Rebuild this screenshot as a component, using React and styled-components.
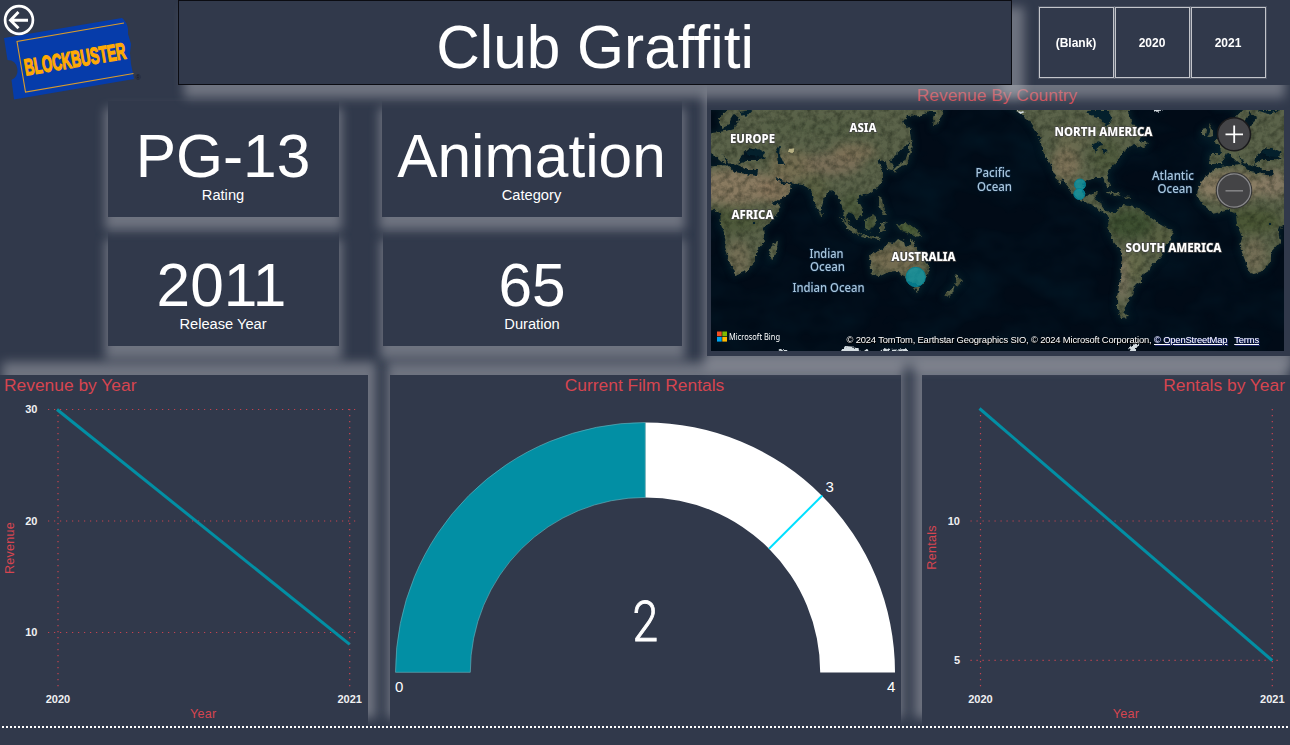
import React from "react";
import styled, { createGlobalStyle } from "styled-components";

const bg = "#31394b";
const red = "#d64550";
const teal = "#028fa4";
const glow = "rgba(178, 180, 187, 0.48)";
const sans = '"Liberation Sans", Arial, sans-serif';

const GlobalStyle = createGlobalStyle`
  * { box-sizing: border-box; }
  body { margin: 0; background: ${bg}; font-family: ${sans}; overflow: hidden; }
  svg { display: block; }
`;

const Page = styled.main`
  width: 1290px;
  height: 745px;
  overflow: hidden;
  display: grid;
  grid-template-rows: 85px 290px 350px 1fr;
  background: ${bg};
`;

const Header = styled.header`
  display: grid;
  grid-template-columns: 178px 834px 278px;
  align-items: start;
  position: relative;
  z-index: 4;
`;

const Brand = styled.div`
  height: 105px;
`;

const FilmTitle = styled.h1`
  position: relative;
  z-index: 2;
  margin: 0;
  padding-top: 1px;
  height: 85px;
  display: flex;
  justify-content: center;
  border: 1px solid #0b0c12;
  background: ${bg};
  box-shadow: 9px 10px 10px 3px ${glow};
  color: #fff;
  font-size: 60.4px;
  font-weight: 400;
  line-height: 90px;
`;

const Slicer = styled.div`
  display: flex;
  gap: 1px;
  height: 85px;
  padding: 7px 0 0 27px;
  background: ${bg};
  box-shadow: -8px 10px 10px 3px ${glow};
`;

const SlicerButton = styled.button`
  width: 75px;
  height: 71px;
  padding: 0 1px 0 0;
  border: 1px solid #c3c5cb;
  outline: 1px solid rgba(160, 163, 172, 0.25);
  outline-offset: 0;
  background: ${bg};
  color: #fff;
  font: 700 12px ${sans};
`;

const Middle = styled.section`
  display: grid;
  grid-template-columns: 707px 583px;
  align-items: start;
  position: relative;
  z-index: 3;
`;

const Cards = styled.div`
  display: grid;
  grid-template-columns: 231px 300px;
  grid-template-rows: 116px 114px;
  column-gap: 43px;
  row-gap: 15px;
  padding: 16px 0 0 108px;
`;

const Card = styled.article`
  position: relative;
  z-index: ${(p) => p.$layer};
  margin-left: ${(p) => p.$inset || 0}px;
  padding-top: ${(p) => p.$top}px;
  background: ${bg};
  box-shadow: 0 10px 10px 3px ${glow};
  color: #fff;
  text-align: center;
`;

const CardValue = styled.div`
  font-size: 60.4px;
  line-height: 60px;
  height: 60px;
  padding-right: ${(p) => p.$shift || 0}px;
`;

const CardLabel = styled.div`
  padding-right: 1px;
  font-size: 14.67px;
  line-height: 18px;
`;

const MapPanel = styled.article`
  height: 271px;
  padding: 0 6px 5px 4px;
  background: ${bg};
  box-shadow: 0 10px 10px 3px ${glow};
`;

const PanelTitle = styled.h2`
  margin: 0;
  height: 25px;
  padding: 0 5px 0 4px;
  color: ${red};
  font-size: 17.4px;
  font-weight: 400;
  line-height: 21px;
  text-align: ${(p) => p.$align};
`;

const MapView = styled.div`
  position: relative;
  width: 573px;
  height: 241px;
  overflow: hidden;
`;

const Bottom = styled.section`
  display: grid;
  grid-template-columns: 368px 511px 368px;
  column-gap: 21.5px;
  position: relative;
  z-index: 1;
`;

const ChartPanel = styled.article`
  background: ${bg};
  box-shadow: ${(p) => p.$dx}px -10px 10px 3px ${glow};
`;

const Footer = styled.footer`
  position: relative;
  z-index: 2;
  padding-top: 1px;
  background: ${bg};
`;

const DottedRule = styled.div`
  height: 2px;
  margin-left: 2px;
  background: repeating-linear-gradient(90deg, #fff 0 2px, transparent 2px 4px);
`;

function BrandMark() {
  return (
    <svg width="178" height="105" viewBox="0 0 178 105">
      <path
        d="M4 38 L122 18 Q127 22 128 29 L128 34 L131 44 L130 53 L131 64 L134 79 L14 99.5 L11.5 80 Q18 77 17.5 69 Q16 60 7.5 60 Z"
        fill="#063caa"
      />
      <path d="M124 23 L17 41.5 L25.5 92 L133.5 73.5" fill="none" stroke="#d99b2c" strokeWidth="1.1" />
      <g transform="translate(25.8 75.6) rotate(-9.7) scale(0.64 1)">
        <text
          fontFamily={sans}
          fontWeight="700"
          fontSize="23"
          textLength="160"
          lengthAdjust="spacingAndGlyphs"
          fill="#ffa903"
          stroke="#ffa903"
          strokeWidth="1.4"
        >
          BLOCKBUSTER
        </text>
      </g>
      <text x="135.5" y="79.5" fontFamily={sans} fontSize="7" fill="#15171f">®</text>
      <circle cx="19" cy="20" r="13.9" fill={bg} stroke="#fff" strokeWidth="2.7" />
      <path d="M28 20.2 H11 M18.5 12 L10.5 20.2 L18.5 28.3" fill="none" stroke="#fff" strokeWidth="2.9" />
    </svg>
  );
}

const asia =
  "M697 106 H944 L942 114 L938 124 L933 127 L934 117 L937 112 L930 112 L921 115 L907 116 L902 123 L911 129 L911 138 L905 147 L897 154 L890 160 L894 167 L892 171 L888 170 L886 162 L879 159 L878 163 L883 170 L883 180 L877 188 L868 194 L860 195 L857 200 L862 209 L862 215 L856 220 L853 213 L848 211 L846 217 L851 226 L853 232 L848 228 L844 215 L841 203 L838 196 L831 190 L825 196 L822 206 L819 212 L814 203 L811 190 L803 185 L790 183 L781 180 L775 176 L781 183 L787 183 L792 187 L787 195 L769 205 L762 193 L755 181 L757 176 L758 170 L748 170 L738 165 L746 160 L761 160 L766 158 L757 150 L749 148 L741 155 L738 166 L728 163 L722 154 L727 166 L718 158 L711 153 L706 164 L693 164 L694 154 L705 154 L704 145 L697 142 L712 133 L725 131 L734 128 L740 118 L733 112 L729 125 L722 128 L719 118 L728 108 Z";
const africa =
  "M704 167 L727 165 L735 172 L757 176 L769 203 L781 205 L776 216 L763 229 L765 242 L755 253 L755 261 L747 271 L735 275 L730 263 L724 247 L726 237 L721 225 L720 213 L714 210 L696 214 L684 202 L681 193 L684 183 L695 172 Z";
const americas =
  "M1010 106 H1128 L1131 122 L1142 134 L1139 141 L1149 143 L1143 148 L1133 145 L1123 151 L1118 161 L1109 169 L1106 175 L1110 187 L1107 187 L1103 178 L1092 178 L1084 182 L1082 192 L1087 197 L1094 192 L1098 192 L1095 200 L1102 202 L1104 210 L1111 212 L1115 212 L1123 205 L1139 208 L1154 220 L1161 225 L1173 231 L1171 240 L1163 247 L1161 257 L1154 263 L1150 270 L1141 276 L1141 282 L1134 286 L1132 296 L1128 301 L1124 312 L1129 317 L1121 318 L1117 308 L1117 297 L1120 280 L1122 253 L1113 241 L1107 227 L1110 217 L1101 211 L1092 205 L1078 199 L1070 190 L1062 178 L1060 184 L1054 174 L1050 163 L1044 155 L1042 144 L1036 131 L1028 119 Z";
const islands = [
  "M869 255 L877 251 L884 249 L888 243 L893 244 L898 239 L904 241 L905 246 L909 247 L911 238 L914 242 L917 250 L924 258 L928 267 L927 276 L922 284 L914 284 L907 280 L904 275 L897 271 L889 272 L880 276 L872 275 Z",
  "M914 287 L920 287 L918 292 Z",
  "M778 240 L777 250 L773 260 L769 258 L770 248 Z",
  "M956 275 L962 281 L958 286 L955 282 Z M955 286 L953 292 L947 298 L944 296 Z",
  "M896 224 L902 225 L907 223 L916 229 L922 237 L914 236 L908 232 L901 231 Z",
  "M865 221 L873 215 L877 219 L873 227 L870 231 L865 228 Z",
  "M838 216 L849 225 L861 234 L859 236 L848 229 Z M862 235 L881 238 L879 240 L861 237 Z",
  "M879 197 L882 199 L884 210 L887 215 L883 215 L879 205 Z M880 224 L887 221 L883 225 L886 231 L883 231 L880 233 Z",
  "M911 132 L913 146 L910 155 L907 164 L898 168 L895 173 L893 170 L898 165 L905 161 L909 150 L909 135 Z",
  "M1106 191 L1121 194 L1120 196 L1107 193 Z M1122 196 L1130 197 L1129 199 Z",
  "M820 211 L823 215 L821 217 Z",
];

function Lands() {
  return (
    <>
      <path d={asia} />
      <path d={asia} transform="translate(516 0)" />
      <path d={africa} />
      <path d={africa} transform="translate(516 0)" />
      <path d={americas} />
      <path d="M1209 123 L1213 129 L1213 136 L1207 138 L1210 132 Z M1202 130 L1206 129 L1205 135 L1202 136 Z" />
      {islands.map((d) => (
        <path key={d} d={d} />
      ))}
    </>
  );
}

function Region({ x, y, rx, ry, c, o = 0.75 }) {
  return <ellipse cx={x} cy={y} rx={rx} ry={ry} fill={c} opacity={o} />;
}

function OceanLabel({ x, y, w, children }) {
  return (
    <text x={x} y={y} textLength={w} lengthAdjust="spacingAndGlyphs" fontSize="12" fontWeight="500" fill="#a9c6de" stroke="#0b2238" strokeWidth="1.6" paintOrder="stroke">
      {children}
    </text>
  );
}

function LandLabel({ x, y, w, children }) {
  return (
    <text x={x} y={y} textLength={w} lengthAdjust="spacingAndGlyphs" fontSize="12" fontWeight="800" fill="#fff" stroke="#444" strokeWidth="1.4" paintOrder="stroke">
      {children}
    </text>
  );
}

function WorldMap() {
  return (
    <svg width="573" height="241" viewBox="711 110 573 241">
      <defs>
        <filter id="rough" x="711" y="110" width="573" height="241" filterUnits="userSpaceOnUse" colorInterpolationFilters="sRGB">
          <feTurbulence type="fractalNoise" baseFrequency="0.22" numOctaves="3" seed="4" result="n" />
          <feDisplacementMap in="SourceGraphic" in2="n" scale="5" xChannelSelector="R" yChannelSelector="G" result="shape" />
          <feGaussianBlur in="shape" stdDeviation="0.5" />
        </filter>
        <filter id="soft" x="-60%" y="-60%" width="220%" height="220%" colorInterpolationFilters="sRGB">
          <feGaussianBlur stdDeviation="5" />
        </filter>
        <filter id="shelf" x="-20%" y="-20%" width="140%" height="140%" colorInterpolationFilters="sRGB">
          <feGaussianBlur stdDeviation="3" />
        </filter>
        <filter id="grain" x="0" y="0" width="100%" height="100%" colorInterpolationFilters="sRGB">
          <feTurbulence type="fractalNoise" baseFrequency="0.16" numOctaves="4" seed="9" />
          <feColorMatrix values="0 0 0 0 0.05  0 0 0 0 0.08  0 0 0 0 0.04  1.7 0 0 0 -0.65" />
        </filter>
        <filter id="haze" x="0" y="0" width="100%" height="100%" colorInterpolationFilters="sRGB">
          <feTurbulence type="fractalNoise" baseFrequency="0.02 0.03" numOctaves="3" seed="21" />
          <feColorMatrix values="0 0 0 0 0.01  0 0 0 0 0.12  0 0 0 0 0.18  1.6 0 0 0 -0.6" />
        </filter>
        <mask id="landMask" maskUnits="userSpaceOnUse" x="711" y="110" width="573" height="241">
          <g fill="#fff" filter="url(#rough)">
            <Lands />
          </g>
        </mask>
      </defs>
      <rect x="711" y="110" width="573" height="241" fill="#010b17" />
      <rect x="711" y="110" width="573" height="241" filter="url(#haze)" opacity="0.6" />
      <g fill="#0a2b33" stroke="#0a2b33" strokeWidth="4" filter="url(#shelf)" opacity="0.6">
        <Lands />
      </g>
      <g mask="url(#landMask)">
        <rect x="711" y="110" width="573" height="241" fill="#5b634a" />
        <g filter="url(#soft)">
          <Region x={735} y={187} rx={40} ry={18} c="#988268" />
          <Region x={776} y={190} rx={17} ry={14} c="#8c775e" />
          <Region x={792} y={166} rx={22} ry={15} c="#7d7154" />
          <Region x={832} y={164} rx={30} ry={11} c="#84735d" />
          <Region x={854} y={152} rx={22} ry={8} c="#86745a" />
          <Region x={820} y={128} rx={60} ry={9} c="#566046" />
          <Region x={815} y={190} rx={12} ry={15} c="#5c6142" />
          <Region x={735} y={220} rx={28} ry={13} c="#4a5635" />
          <Region x={738} y={258} rx={12} ry={17} c="#7b7158" />
          <Region x={1230} y={186} rx={36} ry={15} c="#9a866c" />
          <Region x={1274} y={184} rx={14} ry={14} c="#94826c" />
          <Region x={1251} y={221} rx={30} ry={12} c="#46532f" />
          <Region x={1254} y={256} rx={12} ry={18} c="#7b7159" />
          <Region x={1066} y={164} rx={14} ry={17} c="#8a785d" />
          <Region x={1072} y={138} rx={18} ry={13} c="#6c6c50" />
          <Region x={1106} y={156} rx={16} ry={16} c="#4d5a3b" />
          <Region x={1130} y={224} rx={24} ry={15} c="#34492a" />
          <Region x={1160} y={240} rx={13} ry={14} c="#5a6242" />
          <Region x={1122} y={275} rx={6} ry={26} c="#8c7e69" />
          <Region x={1135} y={264} rx={9} ry={16} c="#696d4b" />
          <Region x={896} y={259} rx={28} ry={15} c="#7d7054" />
          <Region x={908} y={229} rx={14} ry={7} c="#405a2e" />
          <Region x={868} y={224} rx={10} ry={10} c="#405332" />
          <Region x={852} y={207} rx={11} ry={14} c="#465637" />
        </g>
        <rect x="711" y="110" width="573" height="241" filter="url(#grain)" opacity="0.5" />
      </g>
      <g fill="#04202c" filter="url(#rough)">
        <path d="M747 152 L756 148 L765 153 L761 157 L749 156 Z M1263 152 L1272 148 L1282 153 L1276 157 L1265 156 Z" />
        <path d="M776 148 L781 146 L780 155 L784 164 L779 164 L778 156 Z" />
        <path d="M1087 110 H1108 L1112 119 L1107 127 L1101 119 L1090 116 Z" />
        <path d="M1092 144 L1100 142 L1103 146 L1098 147 L1096 154 L1094 148 Z M1102 148 L1109 152 L1102 154 Z" />
        <path d="M752 110 L746 117 L739 112 Z M1284 110 L1268 114 L1257 110 Z" />
        <path d="M752 222 h3 v3 h-3 Z M1268 222 h3 v3 h-3 Z" />
      </g>
      <g fill="#d4dce1" filter="url(#rough)">
        <path d="M778 352 L782 349 L788 352 Z M842 352 L845 347 L857 348 L862 352 Z M864 352 L868 349 L874 352 Z M879 352 L884 348 L890 350 L905 349 L910 352 Z" />
        <path d="M1128 352 L1132 345 L1139 342 L1135 352 Z M1153 110 h9 l-4 3 Z M1018 110 l7 2 l-5 2 Z" />
        <path d="M789 149 l6 -1 l-3 5 l-4 -1 Z" fill="#b7b083" />
      </g>
      <g fontFamily='"Noto Sans", "Open Sans", sans-serif'>
        <LandLabel x={730} y={142.5} w={45}>EUROPE</LandLabel>
        <LandLabel x={849.5} y={132} w={27}>ASIA</LandLabel>
        <LandLabel x={731.5} y={219} w={42}>AFRICA</LandLabel>
        <LandLabel x={891.5} y={260.5} w={64}>AUSTRALIA</LandLabel>
        <LandLabel x={1054.5} y={136} w={98}>NORTH AMERICA</LandLabel>
        <LandLabel x={1125.5} y={251.5} w={96}>SOUTH AMERICA</LandLabel>
        <OceanLabel x={975.5} y={176.5} w={35}>Pacific</OceanLabel>
        <OceanLabel x={977} y={190.5} w={35}>Ocean</OceanLabel>
        <OceanLabel x={1152} y={180} w={42}>Atlantic</OceanLabel>
        <OceanLabel x={1157.5} y={193} w={35}>Ocean</OceanLabel>
        <OceanLabel x={809.5} y={257.5} w={34}>Indian</OceanLabel>
        <OceanLabel x={810} y={271} w={35}>Ocean</OceanLabel>
        <OceanLabel x={792.5} y={291.5} w={72}>Indian Ocean</OceanLabel>
        <text x="729" y="340" fontSize="9.5" textLength="51" lengthAdjust="spacingAndGlyphs" fill="#fff">Microsoft Bing</text>
      </g>
      <g fill="#069db0" fillOpacity="0.72" stroke="#087f91" strokeWidth="1">
        <circle cx="915.7" cy="277" r="9.7" />
        <circle cx="1080" cy="184.5" r="5.5" />
        <circle cx="1079.3" cy="194" r="5.5" />
      </g>
      <path fill="#f25022" d="M717 331.5h4.7v4.7h-4.7z" />
      <path fill="#7fba00" d="M722.3 331.5h4.7v4.7h-4.7z" />
      <path fill="#00a4ef" d="M717 336.9h4.7v4.7h-4.7z" />
      <path fill="#ffb900" d="M722.3 336.9h4.7v4.7h-4.7z" />
      <circle cx="1234" cy="134.3" r="16.5" fill="#444447" stroke="#1a1a1c" strokeWidth="1.5" />
      <path d="M1225.5 134.3h17.5 M1234.2 125.5v17.5" stroke="#fff" strokeWidth="1.8" />
      <circle cx="1234" cy="190.5" r="18.3" fill="#333" />
      <circle cx="1234" cy="190.5" r="16.6" fill="#444446" stroke="#89898b" strokeWidth="1.3" />
      <path d="M1225.5 190.8h17.5" stroke="#818183" strokeWidth="1.6" />
    </svg>
  );
}

const Attribution = styled.div`
  position: absolute;
  right: 25px;
  bottom: 5px;
  display: flex;
  white-space: pre;
  color: #fff;
  font: 9.4px/13px ${sans};
  letter-spacing: -0.16px;
  text-shadow: 1px 1px 0 #000, 0 1px 0 #000;
`;

const MapLink = styled.span`
  margin-right: ${(p) => p.$gap || 0}px;
  text-decoration: underline;
  text-shadow: 0 0 1px #3341a6, 1px 1px 0 #1a2266;
`;

function LineChart({ x0, ticks, line, xs, label, labelY, top }) {
  const left = xs[0] - 10;
  return (
    <svg width="368" height="325" viewBox={`${x0} 400 368 325`}>
      <g stroke={red} strokeWidth="1.2" strokeDasharray="1.2 4.8" opacity="0.9">
        {ticks.map((t) => (
          <path key={t.v} d={`M${left} ${t.y} H${xs[1] + 8}`} />
        ))}
        {xs.map((x) => (
          <path key={x} d={`M${x} ${top} V690`} />
        ))}
      </g>
      <path d={line} fill="none" stroke={teal} strokeWidth="3" strokeLinecap="butt" />
      <g fontFamily={sans} fontSize="11" fontWeight="700" fill="#f0f0f2">
        {ticks.map((t) => (
          <text key={t.v} x={left - 10.5} y={t.y + 3.5} textAnchor="end">{t.v}</text>
        ))}
        <text x={xs[0]} y="703" textAnchor="middle">2020</text>
        <text x={xs[1]} y="703" textAnchor="middle">2021</text>
      </g>
      <g fontFamily={sans} fontSize="12.6" letterSpacing="0.25" fill={red}>
        <text x={(xs[0] + xs[1]) / 2 - 0.5} y="718" textAnchor="middle">Year</text>
        <text transform={`translate(${x0 + 13.5} ${labelY}) rotate(-90)`} textAnchor="middle">{label}</text>
      </g>
    </svg>
  );
}

function Gauge() {
  return (
    <svg width="511" height="325" viewBox="390 400 511 325">
      <path d="M645.25 422.5 A249.75 249.75 0 0 1 895 672.4 H820.2 A174.95 174.95 0 0 0 645.25 497.4 Z" fill="#fff" />
      <path d="M395.5 672.3 A249.75 249.75 0 0 1 645.25 422.5 V497.4 A174.95 174.95 0 0 0 470.3 672.3 Z" fill={teal} stroke="#6fb5c0" strokeWidth="0.6" />
      <path d="M769 548.7 L822.3 495.5" stroke="#00e0ff" strokeWidth="2" />
      <g fontFamily={sans} fontSize="15" fill="#fff">
        <text x="395" y="692">0</text>
        <text x="887" y="692">4</text>
        <text x="825.5" y="492">3</text>
      </g>
      <text
        transform="translate(645.3 641) scale(0.84 1)"
        textAnchor="middle"
        fontFamily="Roboto, sans-serif"
        fontWeight="300"
        fontSize="55"
        fill="#fff"
        stroke="#fff"
        strokeWidth="0.9"
      >
        2
      </text>
    </svg>
  );
}

export default function App() {
  return (
    <Page>
      <GlobalStyle />
      <Header>
        <Brand><BrandMark /></Brand>
        <FilmTitle>Club Graffiti</FilmTitle>
        <Slicer>
          <SlicerButton>(Blank)</SlicerButton>
          <SlicerButton>2020</SlicerButton>
          <SlicerButton>2021</SlicerButton>
        </Slicer>
      </Header>
      <Middle>
        <Cards>
          <Card $layer={2} $top={25}><CardValue $shift={1}>PG-13</CardValue><CardLabel>Rating</CardLabel></Card>
          <Card $layer={2} $top={25}><CardValue $shift={1}>Animation</CardValue><CardLabel>Category</CardLabel></Card>
          <Card $layer={1} $top={23}><CardValue $shift={4}>2011</CardValue><CardLabel>Release Year</CardLabel></Card>
          <Card $layer={1} $top={23} $inset={1}><CardValue $shift={1}>65</CardValue><CardLabel>Duration</CardLabel></Card>
        </Cards>
        <MapPanel>
          <PanelTitle $align="center">Revenue By Country</PanelTitle>
          <MapView>
            <WorldMap />
            <Attribution>
              <span>© 2024 TomTom, Earthstar Geographics SIO, © 2024 Microsoft Corporation, </span>
              <MapLink $gap={7}>© OpenStreetMap</MapLink>
              <MapLink>Terms</MapLink>
            </Attribution>
          </MapView>
        </MapPanel>
      </Middle>
      <Bottom>
        <ChartPanel $dx={5}>
          <PanelTitle $align="left">Revenue by Year</PanelTitle>
          <LineChart
            x0={0}
            xs={[58, 349.7]}
            top={409}
            ticks={[{ v: 30, y: 409.5 }, { v: 20, y: 521 }, { v: 10, y: 632.5 }]}
            line="M57 409.5 L349.7 644.3"
            label="Revenue"
            labelY={548}
          />
        </ChartPanel>
        <ChartPanel $dx={0}>
          <PanelTitle $align="center">Current Film Rentals</PanelTitle>
          <Gauge />
        </ChartPanel>
        <ChartPanel $dx={-5}>
          <PanelTitle $align="right">Rentals by Year</PanelTitle>
          <LineChart
            x0={922}
            xs={[980.5, 1272.3]}
            top={409}
            ticks={[{ v: 10, y: 521 }, { v: 5, y: 660.3 }]}
            line="M979.5 408.5 L1272.3 660.5"
            label="Rentals"
            labelY={547.5}
          />
        </ChartPanel>
      </Bottom>
      <Footer><DottedRule /></Footer>
    </Page>
  );
}
